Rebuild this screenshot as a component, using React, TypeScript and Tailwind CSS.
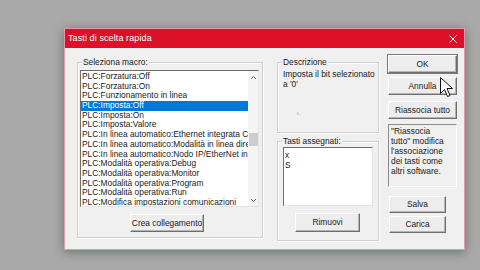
const macros = [
  "PLC:Forzatura:Off",
  "PLC:Forzatura:On",
  "PLC:Funzionamento in linea",
  "PLC:Imposta:Off",
  "PLC:Imposta:On",
  "PLC:Imposta:Valore",
  "PLC:In linea automatico:Ethernet integrata CPU",
  "PLC:In linea automatico:Modalità in linea diretta",
  "PLC:In linea automatico:Nodo IP/EtherNet in linea",
  "PLC:Modalità operativa:Debug",
  "PLC:Modalità operativa:Monitor",
  "PLC:Modalità operativa:Program",
  "PLC:Modalità operativa:Run",
  "PLC:Modifica impostazioni comunicazioni",
];

const font = { fontFamily: '"Liberation Sans", Arial, sans-serif' };

function Btn({ label, className = "" }: { label: string; className?: string }) {
  return (
    <div
      className={`flex items-center justify-center bg-[#ededed] border border-t-[#ffffff] border-l-[#ffffff] border-r-[#6e6e6e] border-b-[#6e6e6e] shadow-[inset_-1px_-1px_0_#b4b4b4] text-[8.4px] text-[#1a1a1a] ${className}`}
    >
      {label}
    </div>
  );
}

function Group({ title, className = "", children }: { title: string; className?: string; children?: React.ReactNode }) {
  return (
    <div className={`relative border border-[#cfcfcf] shadow-[inset_1px_1px_0_#ffffff,1px_1px_0_#ffffff] ${className}`}>
      <span className="absolute left-[4px] -top-[6px] bg-[#f0f0f0] px-[1px] text-[8.4px] leading-[11px] text-[#1a1a1a]">
        {title}
      </span>
      {children}
    </div>
  );
}

function Chevron({ up }: { up?: boolean }) {
  return (
    <svg width="7" height="5" viewBox="0 0 7 5">
      <path
        d={up ? "M1 4 L3.5 1.5 L6 4" : "M1 1 L3.5 3.5 L6 1"}
        fill="none"
        stroke="#606060"
        strokeWidth="1"
      />
    </svg>
  );
}

export default function App() {
  return (
    <div className="w-[480px] h-[270px] overflow-hidden bg-[#a9a9a9] pt-[28px] pl-[64px]" style={font}>
      <div className="relative w-[401px] h-[222px] flex flex-col border border-[#e39aab] bg-[#f0f0f0] shadow-[0_2px_10px_rgba(0,0,0,0.35)]">
        {/* title bar */}
        <div className="h-[19px] shrink-0 bg-[#dc1029] flex items-center justify-between pl-[3px] pr-[7px]">
          <span className="text-[9px] text-white tracking-[0.1px]">Tasti di scelta rapida</span>
          <svg width="8" height="8" viewBox="0 0 8 8">
            <path d="M0.5 0.5 L7.5 7.5 M7.5 0.5 L0.5 7.5" stroke="#ffffff" strokeWidth="1" />
          </svg>
        </div>

        <div className="flex flex-1">
          {/* left group */}
          <Group title="Seleziona macro:" className="ml-[12px] mt-[14px] w-[186px] h-[176px] flex flex-col">
            <div className="mt-[7px] ml-[2px] w-[179px] h-[137px] bg-white border border-t-[#6d6d6d] border-l-[#6d6d6d] border-r-[#e3e3e3] border-b-[#e3e3e3] flex overflow-hidden">
              <div className="flex-1 flex flex-col pt-[1px] overflow-hidden">
                {macros.map((m, i) => (
                  <div
                    key={m}
                    className={`h-[9.7px] shrink-0 leading-[9.7px] pl-[1px] text-[8.4px] whitespace-nowrap ${
                      i === 3 ? "bg-[#0078d7] text-white" : "text-[#1a1a1a]"
                    }`}
                  >
                    {m}
                  </div>
                ))}
              </div>
              <div className="w-[10px] shrink-0 bg-[#f4f4f4] flex flex-col items-center">
                <div className="h-[12px] flex items-center">
                  <Chevron up />
                </div>
                <div className="mt-[50px] w-[9px] h-[13px] bg-[#cdcdcd]" />
                <div className="flex-1" />
                <div className="h-[12px] flex items-center">
                  <Chevron />
                </div>
              </div>
            </div>
            <Btn label="Crea collegamento" className="mt-[7px] ml-[52px] w-[74px] h-[18px]" />
          </Group>

          {/* middle column */}
          <div className="ml-[14px] mt-[14px] flex flex-col">
            <Group title="Descrizione" className="w-[102px] h-[71px]">
              <div className="pt-[6px] pl-[5px] text-[8.4px] leading-[10px] text-[#1a1a1a]">
                <div>Imposta il bit selezionato</div>
                <div>a '0'</div>
                <div className="mt-[21px] ml-[14px] text-[6px] leading-[6px] text-[#9a9a9a]">ı.</div>
              </div>
            </Group>
            <Group title="Tasti assegnati:" className="mt-[8px] w-[102px] h-[100px] flex flex-col">
              <div className="mt-[5px] ml-[5px] w-[90px] h-[59px] bg-white border border-t-[#6d6d6d] border-l-[#6d6d6d] border-r-[#e3e3e3] border-b-[#e3e3e3] pt-[2px] pl-[1px] text-[8.4px] leading-[10px] text-[#1a1a1a]">
                <div>x</div>
                <div>S</div>
              </div>
              <Btn label="Rimuovi" className="mt-[7px] ml-[17px] w-[65px] h-[19px]" />
            </Group>
          </div>

          {/* right column */}
          <div className="ml-[9px] mt-[7px] flex flex-col w-[69px]">
            <Btn label="OK" className="h-[18px] outline outline-1 outline-[#7a7a7a]" />
            <Btn label="Annulla" className="mt-[4px] h-[18px]" />
            <Btn label="Riassocia tutto" className="mt-[6px] h-[18px]" />
            <div className="mt-[5px] h-[63px] border border-t-[#8a8a8a] border-l-[#8a8a8a] border-r-[#ffffff] border-b-[#ffffff] pt-[1px] pl-[2px] text-[8.4px] leading-[10px] text-[#1a1a1a]">
              <div>"Riassocia</div>
              <div>tutto" modifica</div>
              <div>l'associazione</div>
              <div>dei tasti come</div>
              <div>altri software.</div>
            </div>
            <Btn label="Salva" className="mt-[9px] w-[57px] h-[17px] ml-[1px]" />
            <Btn label="Carica" className="mt-[3px] w-[57px] h-[17px] ml-[1px]" />
          </div>
        </div>

        {/* mouse cursor */}
        <svg
          className="absolute left-[375px] top-[48px]"
          width="16"
          height="22"
          viewBox="0 0 16 22"
        >
          <path
            d="M0.5 0.5 L0.5 16.5 L4.5 12.5 L7.5 19.5 L10 18.5 L7 11.5 L12.5 11.5 Z"
            fill="#ffffff"
            stroke="#111111"
            strokeWidth="1"
            strokeLinejoin="round"
          />
        </svg>
      </div>
    </div>
  );
}
